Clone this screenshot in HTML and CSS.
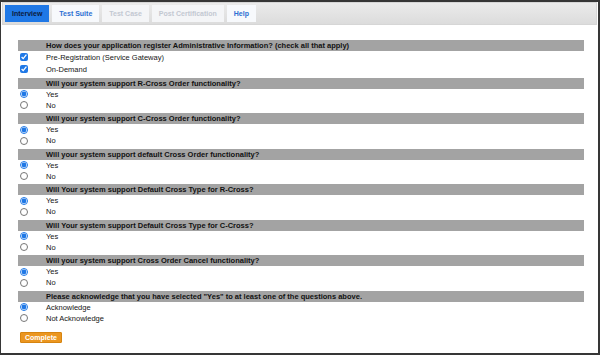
FILE: index.html
```html
<!DOCTYPE html>
<html lang="en">
<head>
    <meta charset="UTF-8">
    <meta name="viewport" content="width=device-width, initial-scale=1.0">
    <title>Interview</title>
    <link rel="stylesheet" href="styles.css">
</head>
<body>
    <div class="frame">
        <ul class="tabs">
            <li class="tab active">Interview</li>
            <li class="tab">Test Suite</li>
            <li class="tab disabled">Test Case</li>
            <li class="tab disabled">Post Certification</li>
            <li class="tab">Help</li>
        </ul>

        <form class="survey">
            <div class="question multi">
                <div class="q-head">How does your application register Administrative Information? (check all that apply)</div>
                <label class="opt"><span class="ctl"><input type="checkbox" name="reg" checked></span>Pre-Registration (Service Gateway)</label>
                <label class="opt"><span class="ctl"><input type="checkbox" name="reg" checked></span>On-Demand</label>
            </div>

            <div class="question">
                <div class="q-head">Will your system support R-Cross Order functionality?</div>
                <label class="opt"><span class="ctl"><input type="radio" name="q1" checked></span>Yes</label>
                <label class="opt"><span class="ctl"><input type="radio" name="q1"></span>No</label>
            </div>

            <div class="question">
                <div class="q-head">Will your system support C-Cross Order functionality?</div>
                <label class="opt"><span class="ctl"><input type="radio" name="q2" checked></span>Yes</label>
                <label class="opt"><span class="ctl"><input type="radio" name="q2"></span>No</label>
            </div>

            <div class="question">
                <div class="q-head">Will your system support default Cross Order functionality?</div>
                <label class="opt"><span class="ctl"><input type="radio" name="q3" checked></span>Yes</label>
                <label class="opt"><span class="ctl"><input type="radio" name="q3"></span>No</label>
            </div>

            <div class="question">
                <div class="q-head">Will Your system support Default Cross Type for R-Cross?</div>
                <label class="opt"><span class="ctl"><input type="radio" name="q4" checked></span>Yes</label>
                <label class="opt"><span class="ctl"><input type="radio" name="q4"></span>No</label>
            </div>

            <div class="question">
                <div class="q-head">Will Your system support Default Cross Type for C-Cross?</div>
                <label class="opt"><span class="ctl"><input type="radio" name="q5" checked></span>Yes</label>
                <label class="opt"><span class="ctl"><input type="radio" name="q5"></span>No</label>
            </div>

            <div class="question">
                <div class="q-head">Will your system support Cross Order Cancel functionality?</div>
                <label class="opt"><span class="ctl"><input type="radio" name="q6" checked></span>Yes</label>
                <label class="opt"><span class="ctl"><input type="radio" name="q6"></span>No</label>
            </div>

            <div class="question">
                <div class="q-head">Please acknowledge that you have selected "Yes" to at least one of the questions above.</div>
                <label class="opt"><span class="ctl"><input type="radio" name="ack" checked></span>Acknowledge</label>
                <label class="opt"><span class="ctl"><input type="radio" name="ack"></span>Not Acknowledge</label>
            </div>

            <button type="button" class="complete">Complete</button>
        </form>
    </div>
</body>
</html>
```

FILE: styles.css
```css
html, body {
    margin: 0;
    padding: 0;
    background-color: #fff;
}
body {
    font-family: "Liberation Sans", Arial, sans-serif;
    color: #111;
}
.frame {
    box-sizing: border-box;
    width: 600px;
    height: 355px;
    border: 2px solid #363636;
    border-left-width: 1px;
    padding: 0 0 0 1px;
}

/* tab strip */
.tabs {
    list-style: none;
    margin: 0 1px 0 0;
    padding: 2px 2px 0;
    height: 19px;
    display: flex;
    gap: 3px;
    background: linear-gradient(#ebebeb, #dcdcdc);
    border: 1px solid #d6d6d6;
}
.tab {
    height: 17px;
    padding: 0 7px;
    display: flex;
    align-items: center;
    font-size: 7px;
    font-weight: bold;
    color: #2d6fd2;
    background-color: #f7f9fc;
}
.tab.active {
    background-color: #1f78e6;
    color: #0b1a3d;
}
.tab.disabled {
    color: #c3c8d2;
    background-color: #f4f5f7;
}

/* questions */
.survey {
    margin: 15px 0 0 16px;
    width: 566px;
}
.question {
    margin-top: 2.5px;
}
.question:first-child {
    margin-top: 0;
}
.q-head {
    height: 11px;
    line-height: 11px;
    padding-left: 28px;
    background-color: #a3a3a3;
    font-size: 7.5px;
    font-weight: bold;
    color: #111;
    white-space: nowrap;
}
.opt {
    display: flex;
    align-items: center;
    height: 11px;
    font-size: 7.5px;
    color: #151515;
}
.multi .opt {
    height: 12px;
}
.ctl {
    width: 28px;
    display: flex;
    align-items: center;
    padding-left: 2px;
    box-sizing: border-box;
}
.ctl input {
    margin: 0;
    width: 8px;
    height: 8px;
    accent-color: #1f78e6;
}
.complete {
    margin-top: 8px;
    margin-left: 2px;
    height: 11px;
    padding: 0 4px;
    border: 1px solid #d68410;
    border-radius: 1px;
    background-color: #eb9620;
    color: #fff;
    font-family: "Liberation Sans", Arial, sans-serif;
    font-size: 7px;
    font-weight: bold;
    line-height: 9px;
    cursor: pointer;
}
```
